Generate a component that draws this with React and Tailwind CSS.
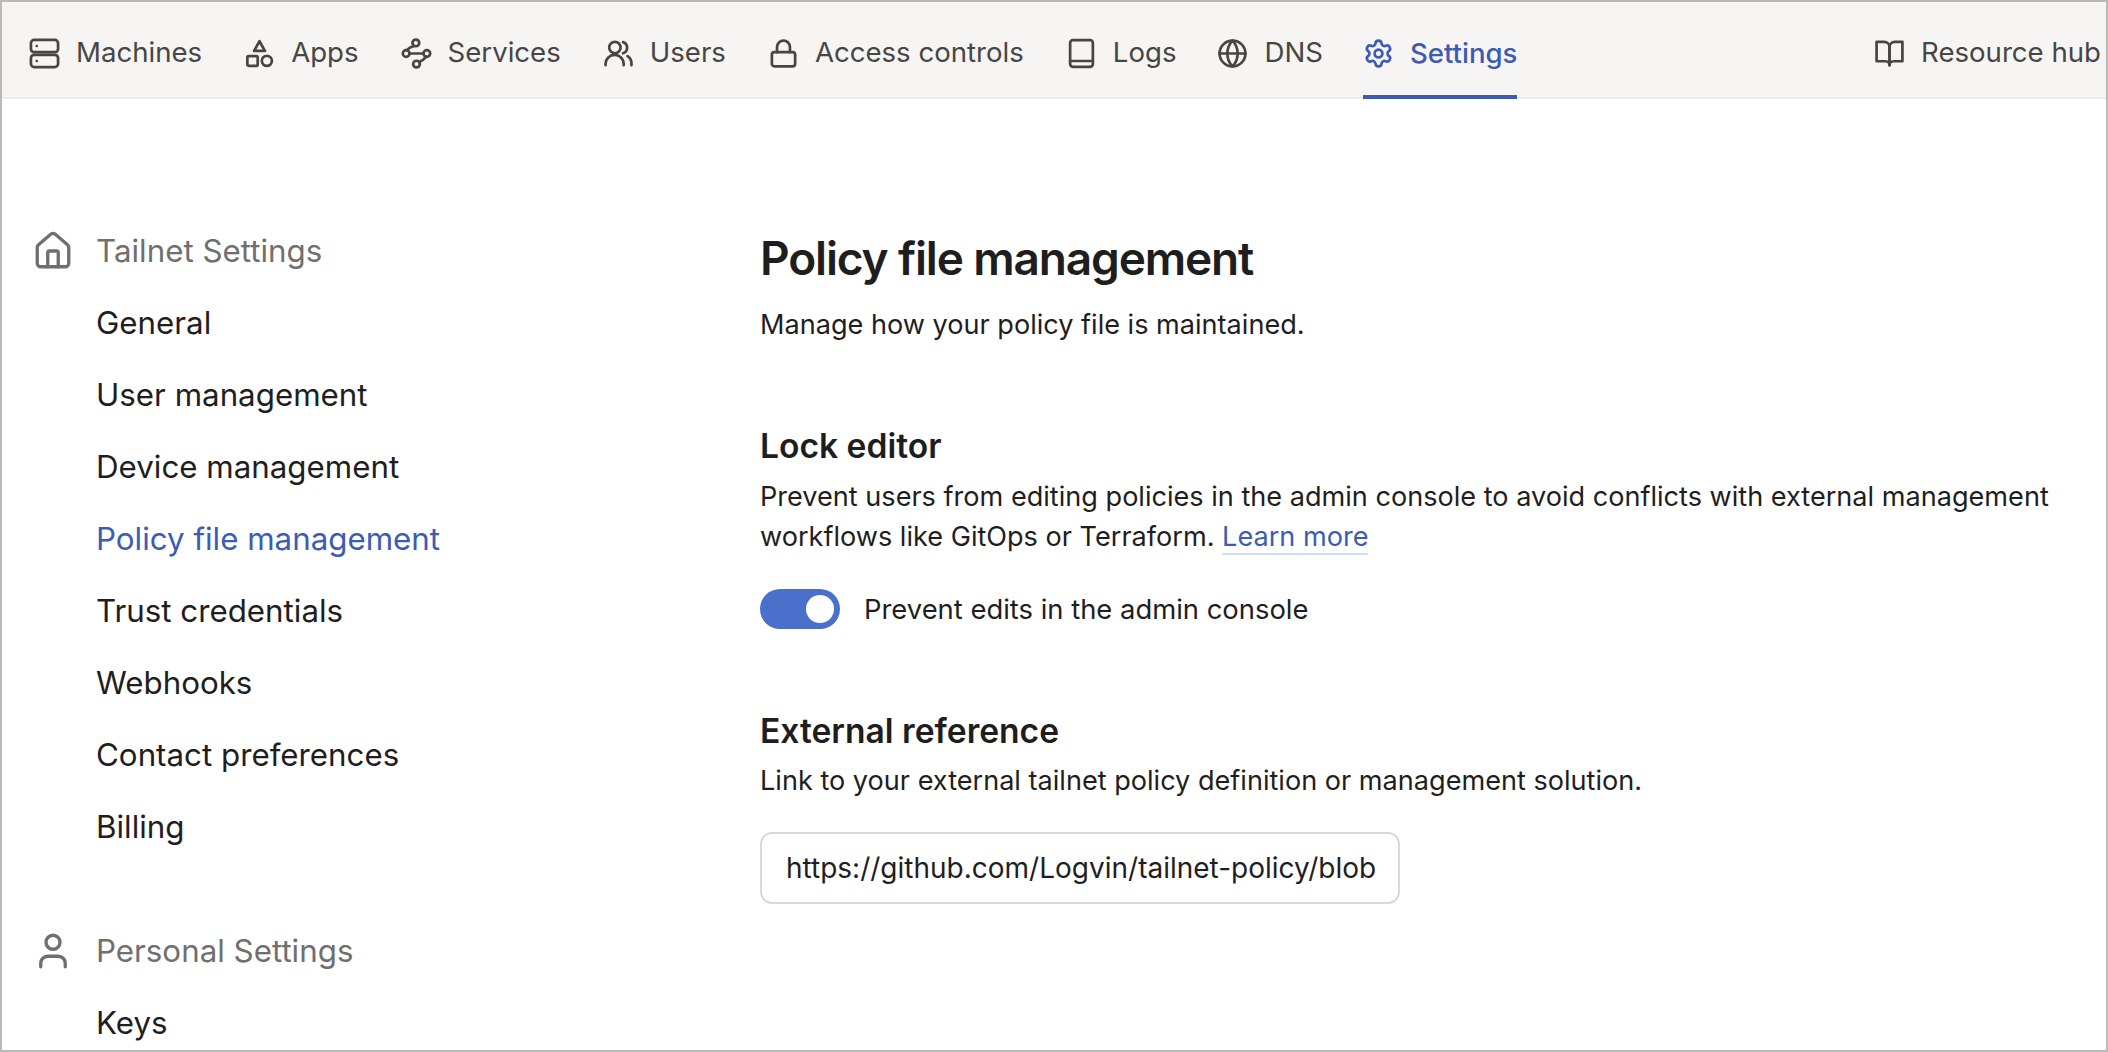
import React from "react";
import { Lock, Globe, Settings, House, User } from "lucide-react";

function MachinesIcon({ className }) {
  return (
    <svg viewBox="0 0 24 24" fill="none" stroke="currentColor" strokeWidth="2.1" strokeLinecap="round" strokeLinejoin="round" className={className}>
      <rect x="1.5" y="1.5" width="21" height="9.5" rx="2.5" />
      <rect x="1.5" y="13" width="21" height="9.5" rx="2.5" />
      <path d="M6 6.2h.01M6 17.8h.01" />
    </svg>
  );
}

function AppsIcon({ className }) {
  return (
    <svg viewBox="0 0 24 24" fill="none" stroke="currentColor" strokeWidth="2.1" strokeLinecap="round" strokeLinejoin="round" className={className}>
      <path d="M12 2.5l4.2 7.5h-8.4z" />
      <rect x="2.6" y="14" width="8" height="7.5" rx="1" />
      <circle cx="17.7" cy="17.7" r="3.9" />
    </svg>
  );
}

function ServicesIcon({ className }) {
  return (
    <svg viewBox="0 0 24 24" fill="none" stroke="currentColor" strokeWidth="2.1" strokeLinecap="round" strokeLinejoin="round" className={className}>
      <circle cx="11.5" cy="3.8" r="2.6" />
      <circle cx="4" cy="12" r="2.6" />
      <circle cx="20" cy="12" r="2.6" />
      <circle cx="12" cy="20.2" r="2.6" />
      <path d="M10.2 6.2Q6.5 7 4.5 9.4M6.6 12h10.8M19.5 14.6Q17.5 17 14 18.6" />
    </svg>
  );
}

function UsersIcon({ className }) {
  return (
    <svg viewBox="0 0 24 24" fill="none" stroke="currentColor" strokeWidth="2.1" strokeLinecap="round" strokeLinejoin="round" className={className}>
      <circle cx="9.2" cy="7.4" r="4.4" />
      <path d="M2 21v-1a7 7 0 0 1 14 0v1" />
      <path d="M15.5 3.2a4.5 4.5 0 0 1 0 8.6" />
      <path d="M19 14a6.5 6.5 0 0 1 3 5.5V21" />
    </svg>
  );
}

function LogsIcon({ className }) {
  return (
    <svg viewBox="0 0 24 24" fill="none" stroke="currentColor" strokeWidth="2.1" strokeLinecap="round" strokeLinejoin="round" className={className}>
      <rect x="3.2" y="1.6" width="17.6" height="20.8" rx="2.2" />
      <path d="M3.2 17.8h17.6" />
    </svg>
  );
}

function HubIcon({ className }) {
  return (
    <svg viewBox="0 0 24 24" fill="none" stroke="currentColor" strokeWidth="2.1" strokeLinecap="round" strokeLinejoin="round" className={className}>
      <path d="M2 3h6a4 4 0 0 1 4 4v14a3 3 0 0 0-3-3H2z" />
      <path d="M22 3h-6a4 4 0 0 0-4 4v14a3 3 0 0 1 3-3h7z" />
    </svg>
  );
}

function NavItem({ icon: Icon, label, ml, active }) {
  return (
    <div className={`flex items-center gap-[16px] ${ml} ${active ? "h-[97px] border-b-[4px] border-[#3d5bb5] pt-[10px] font-medium text-[#3d5bb5]" : "h-[96px] pt-[6px]"}`}>
      <Icon className="h-[31px] w-[31px] shrink-0" strokeWidth={2.1} />
      <span>{label}</span>
    </div>
  );
}

function SideItem({ label, active }) {
  return (
    <div className={`flex h-[72px] items-center pl-[94px] ${active ? "text-[#3d5bb5]" : "text-[#1f1e1e]"}`}>{label}</div>
  );
}

function SideHeading({ icon: Icon, label }) {
  return (
    <div className="flex h-[72px] items-center pl-[30px] text-[#706f6d]">
      <Icon className="h-[42px] w-[42px] shrink-0" strokeWidth={1.9} />
      <span className="ml-[22px]">{label}</span>
    </div>
  );
}

export default function App() {
  return (
    <div className="flex h-screen w-full flex-col overflow-hidden border-2 border-[#b9b9b7] bg-white font-['Inter',sans-serif]">
      <header className="flex h-[97px] shrink-0 items-start border-b-2 border-[#ececea] bg-[#f6f5f4] pl-[27px] pr-[5px] text-[27.6px] text-[#474644]">
        <NavItem icon={MachinesIcon} label="Machines" ml="" />
        <NavItem icon={AppsIcon} label="Apps" ml="ml-[42px]" />
        <NavItem icon={ServicesIcon} label="Services" ml="ml-[42px]" />
        <NavItem icon={UsersIcon} label="Users" ml="ml-[42px]" />
        <NavItem icon={Lock} label="Access controls" ml="ml-[42px]" />
        <NavItem icon={LogsIcon} label="Logs" ml="ml-[42px]" />
        <NavItem icon={Globe} label="DNS" ml="ml-[41px]" />
        <NavItem icon={Settings} label="Settings" ml="ml-[40px]" active />
        <div className="ml-auto">
          <NavItem icon={HubIcon} label="Resource hub" ml="" />
        </div>
      </header>

      <div className="flex min-h-0 flex-1">
        <aside className="w-[758px] shrink-0 pt-[116px] text-[31.3px]">
          <SideHeading icon={House} label="Tailnet Settings" />
          <SideItem label="General" />
          <SideItem label="User management" />
          <SideItem label="Device management" />
          <SideItem label="Policy file management" active />
          <SideItem label="Trust credentials" />
          <SideItem label="Webhooks" />
          <SideItem label="Contact preferences" />
          <SideItem label="Billing" />
          <div className="mt-[52px]">
            <SideHeading icon={User} label="Personal Settings" />
            <SideItem label="Keys" />
          </div>
        </aside>

        <main className="min-w-0 flex-1 pt-[125px] text-[27.1px] text-[#1f1e1e]">
          <h1 className="text-[46px] font-semibold leading-[68px] tracking-[-0.025em]">Policy file management</h1>
          <p className="mt-[15px] leading-[36px]">Manage how your policy file is maintained.</p>

          <h2 className="mt-[83px] text-[33.6px] font-semibold leading-[40px]">Lock editor</h2>
          <p className="mt-[11px] leading-[40px]">
            Prevent users from editing policies in the admin console to avoid conflicts with external management
            <br />
            workflows like GitOps or Terraform.{" "}
            <a className="border-b-2 border-[#cfdcfb] text-[#3d5bb5]">Learn more</a>
          </p>
          <div className="mt-[31px] flex items-center gap-[24px]">
            <div className="flex h-[40px] w-[80px] items-center justify-end rounded-full bg-[#4b70cc] pr-[6px]">
              <div className="h-[28px] w-[28px] rounded-full bg-white" />
            </div>
            <span className="pt-[1px] text-[27.4px]">Prevent edits in the admin console</span>
          </div>

          <h2 className="mt-[81px] text-[33.6px] font-semibold leading-[40px]">External reference</h2>
          <p className="mt-[10px] leading-[40px]">Link to your external tailnet policy definition or management solution.</p>
          <div className="mt-[31px] flex h-[72px] w-[640px] items-center overflow-hidden rounded-[12px] border-2 border-[#dbd8d8] pl-[24px] text-[28px] whitespace-nowrap">
            https://github.com/Logvin/tailnet-policy/blob
          </div>
        </main>
      </div>
    </div>
  );
}
